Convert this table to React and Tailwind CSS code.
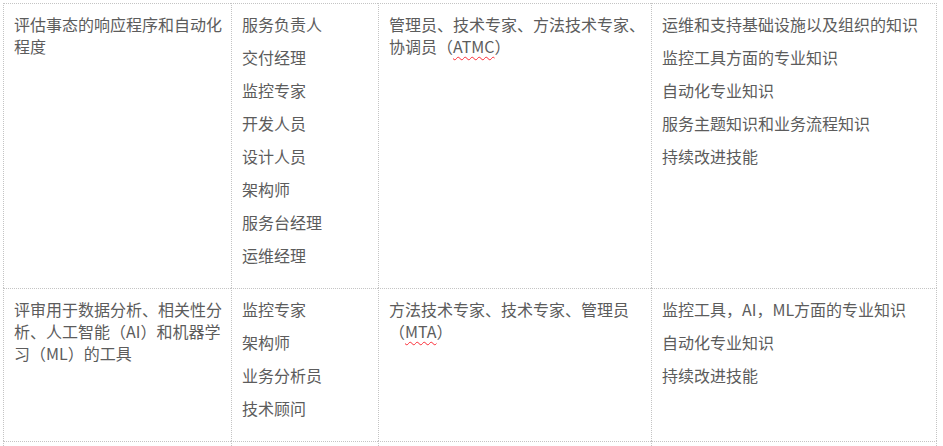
import React from "react";

const rows = [
  {
    a: ["评估事态的响应程序和自动化程度"],
    b: ["服务负责人", "交付经理", "监控专家", "开发人员", "设计人员", "架构师", "服务台经理", "运维经理"],
    c: (
      <p className="mb-[11px]">
        管理员、技术专家、方法技术专家、协调员（
        <span className="underline decoration-wavy decoration-red-500 decoration-1 underline-offset-[3px]">ATMC</span>）
      </p>
    ),
    d: ["运维和支持基础设施以及组织的知识", "监控工具方面的专业知识", "自动化专业知识", "服务主题知识和业务流程知识", "持续改进技能"],
  },
  {
    a: ["评审用于数据分析、相关性分析、人工智能（AI）和机器学习（ML）的工具"],
    b: ["监控专家", "架构师", "业务分析员", "技术顾问"],
    c: (
      <p className="mb-[11px]">
        方法技术专家、技术专家、管理员（
        <span className="underline decoration-wavy decoration-red-500 decoration-1 underline-offset-[3px]">MTA</span>）
      </p>
    ),
    d: ["监控工具，AI，ML方面的专业知识", "自动化专业知识", "持续改进技能"],
  },
];

function Cell({ children, last }) {
  return (
    <div
      className={
        "border-l border-t border-dotted border-[#c4c4c4] pl-[10px] pr-[4px] pt-[9px] pb-[11px] " +
        (last ? "border-r" : "")
      }
    >
      {children}
    </div>
  );
}

function Paras({ items }) {
  return items.map((t, i) => (
    <p key={i} className="mb-[11px]">
      {t}
    </p>
  ));
}

export default function App() {
  return (
    <div className="h-[446px] overflow-hidden bg-white pl-[3px] pt-[3px]">
      <div
        className="grid grid-cols-[228px_147px_273px_286px] text-[16px] leading-[22px] text-[#5c5c5c]"
        style={{ fontFamily: '"Noto Sans CJK SC", "Microsoft YaHei", sans-serif' }}
      >
        {rows.map((r, i) => (
          <React.Fragment key={i}>
            <Cell>
              <Paras items={r.a} />
            </Cell>
            <Cell>
              <Paras items={r.b} />
            </Cell>
            <Cell>{r.c}</Cell>
            <Cell last>
              <Paras items={r.d} />
            </Cell>
          </React.Fragment>
        ))}
        <Cell>
          <div className="h-[40px]" />
        </Cell>
        <Cell>
          <div className="h-[40px]" />
        </Cell>
        <Cell>
          <div className="h-[40px]" />
        </Cell>
        <Cell last>
          <div className="h-[40px]" />
        </Cell>
      </div>
    </div>
  );
}
